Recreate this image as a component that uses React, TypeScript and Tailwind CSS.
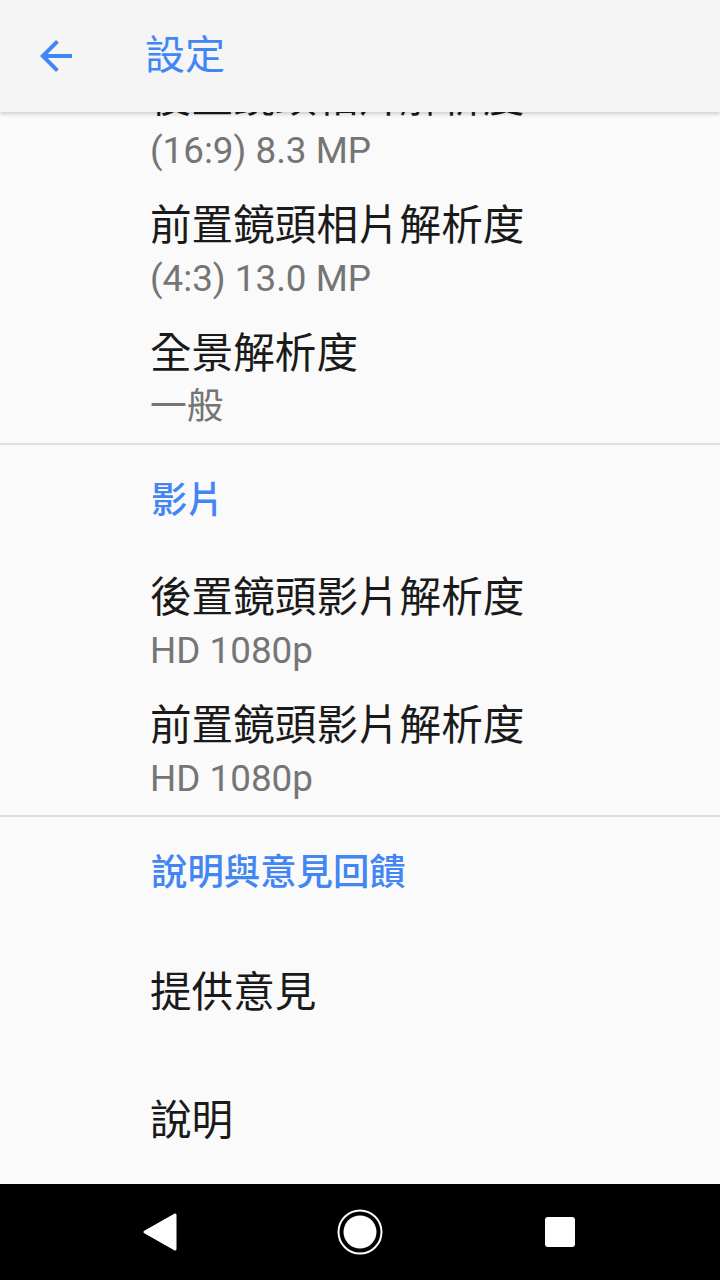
import React from "react";

const font = { fontFamily: '"Roboto", "Noto Sans CJK TC", sans-serif' };

function TwoLine({ title, sub }: { title: string; sub: string }) {
  return (
    <div className="h-[128px] pl-[150px] pt-[15px]">
      <div className="text-[41.6px] leading-[48px] text-[#1a1a1a]">{title}</div>
      <div className="text-[36.8px] leading-[58px] text-[#757575]">{sub}</div>
    </div>
  );
}

function OneLine({ title }: { title: string }) {
  return (
    <div className="h-[128px] pl-[150px] flex items-center">
      <div className="text-[41.6px] leading-[48px] text-[#1a1a1a]">{title}</div>
    </div>
  );
}

function Category({ title, h }: { title: string; h: string }) {
  return (
    <div className={`${h} pl-[151px] pt-[32px]`}>
      <div className="text-[36.4px] leading-[48px] font-medium text-[#4285f4]">{title}</div>
    </div>
  );
}

export default function App() {
  return (
    <div className="w-[720px] h-[1280px] flex flex-col bg-[#fafafa] overflow-hidden" style={font}>
      <header className="h-[112px] shrink-0 bg-[#f5f5f5] relative z-10 flex items-center shadow-[0_2px_4px_rgba(0,0,0,0.18)]">
        <div className="w-[48px] h-[48px] ml-[32px]">
          <svg viewBox="0 0 24 24" width="48" height="48">
            <path d="M20 11H7.83l5.59-5.59L12 4l-8 8 8 8 1.41-1.41L7.83 13H20v-2z" fill="#4285f4" />
          </svg>
        </div>
        <div className="ml-[65px] text-[40px] leading-[48px] text-[#4285f4]">設定</div>
      </header>
      <main className="flex-1 overflow-hidden">
        <div className="-mt-[53px]">
          <TwoLine title="後置鏡頭相片解析度" sub="(16:9) 8.3 MP" />
          <TwoLine title="前置鏡頭相片解析度" sub="(4:3) 13.0 MP" />
          <TwoLine title="全景解析度" sub="一般" />
          <div className="h-[2px] bg-[#e0e0e0]" />
          <Category title="影片" h="h-[114px]" />
          <TwoLine title="後置鏡頭影片解析度" sub="HD 1080p" />
          <TwoLine title="前置鏡頭影片解析度" sub="HD 1080p" />
          <div className="h-[2px] bg-[#e0e0e0]" />
          <Category title="說明與意見回饋" h="h-[112px]" />
          <OneLine title="提供意見" />
          <OneLine title="說明" />
        </div>
      </main>
      <nav className="h-[96px] shrink-0 bg-black flex items-center">
        <div className="ml-[142px] w-[36px] h-[40px]">
          <svg viewBox="0 0 36 40" width="36" height="40">
            <path d="M33 3 L33 37 L3 20 Z" fill="white" stroke="white" strokeWidth="3" strokeLinejoin="round" />
          </svg>
        </div>
        <div className="ml-[158px] w-[48px] h-[48px]">
          <svg viewBox="0 0 48 48" width="48" height="48">
            <circle cx="24" cy="24" r="21.5" fill="none" stroke="white" strokeWidth="2" />
            <circle cx="24" cy="24" r="16.5" fill="white" />
          </svg>
        </div>
        <div className="ml-[161px] w-[30px] h-[30px] bg-white rounded-[3px]" />
      </nav>
    </div>
  );
}
